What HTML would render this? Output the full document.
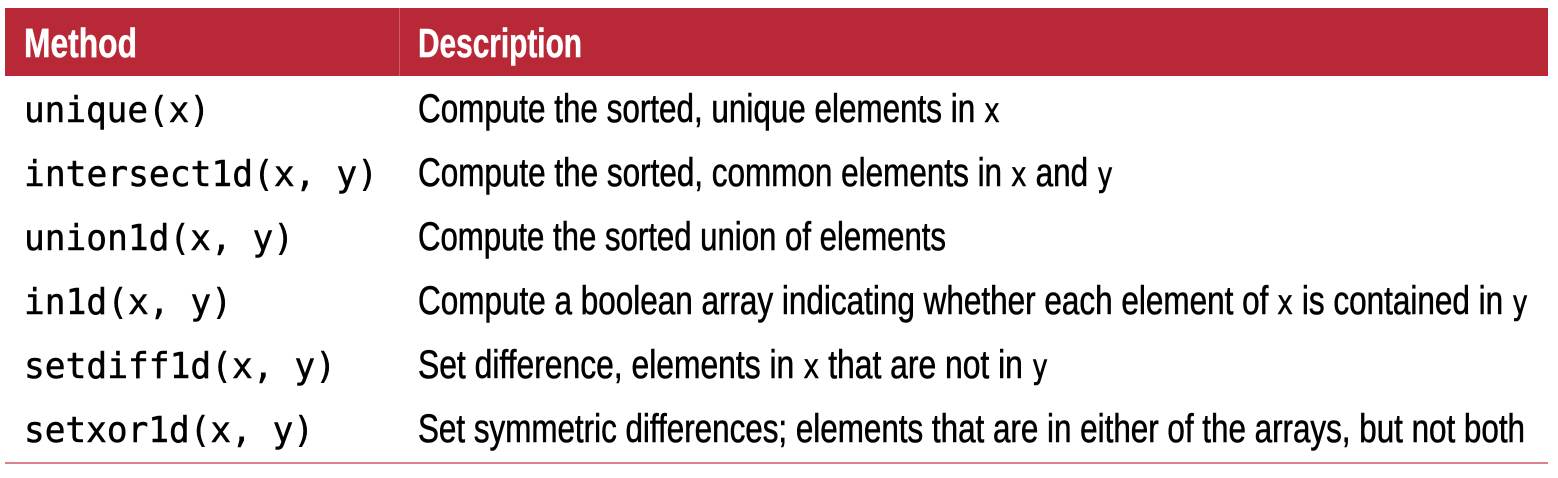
<!DOCTYPE html>
<html><head><meta charset="utf-8"><style>
html,body{margin:0;padding:0;background:#fff;}
svg{display:block;}
.m{font-family:"DejaVu Sans Mono","Liberation Mono",monospace;font-size:36px;fill:#000;stroke:#000;stroke-width:0.5px;}
.d{font-family:"Liberation Sans Narrow","Liberation Sans",sans-serif;font-size:40px;fill:#000;stroke:#000;stroke-width:0.6px;}
.d tspan{font-family:"DejaVu Sans Mono","Liberation Mono",monospace;font-size:34px;}
.h{font-family:"Liberation Sans Narrow","Liberation Sans",sans-serif;font-size:41px;font-weight:bold;fill:#fff;stroke:#fff;stroke-width:0.5px;}
</style></head><body>
<svg width="1558" height="478" viewBox="0 0 1558 478" xmlns="http://www.w3.org/2000/svg">
<rect x="5" y="8" width="1543" height="68" fill="#b92837"/>
<rect x="399" y="8" width="1" height="68" fill="#cf5a66"/>
<text class="h" x="24" y="57" textLength="113" lengthAdjust="spacingAndGlyphs">Method</text>
<text class="h" x="418" y="57" textLength="164" lengthAdjust="spacingAndGlyphs">Description</text>

<text class="m" x="24" y="122" textLength="186" lengthAdjust="spacingAndGlyphs">unique(x)</text>
<text class="m" x="24" y="186" textLength="354" lengthAdjust="spacingAndGlyphs">intersect1d(x, y)</text>
<text class="m" x="24" y="250" textLength="270" lengthAdjust="spacingAndGlyphs">union1d(x, y)</text>
<text class="m" x="24" y="314" textLength="208" lengthAdjust="spacingAndGlyphs">in1d(x, y)</text>
<text class="m" x="24" y="378" textLength="312" lengthAdjust="spacingAndGlyphs">setdiff1d(x, y)</text>
<text class="m" x="24" y="442" textLength="290" lengthAdjust="spacingAndGlyphs">setxor1d(x, y)</text>

<text class="d" x="418" y="122" textLength="582" lengthAdjust="spacingAndGlyphs">Compute the sorted, unique elements in <tspan>x</tspan></text>
<text class="d" x="418" y="186" textLength="695" lengthAdjust="spacingAndGlyphs">Compute the sorted, common elements in <tspan>x</tspan> and <tspan>y</tspan></text>
<text class="d" x="418" y="250" textLength="528" lengthAdjust="spacingAndGlyphs">Compute the sorted union of elements</text>
<text class="d" x="418" y="314" textLength="1110" lengthAdjust="spacingAndGlyphs">Compute a boolean array indicating whether each element of <tspan>x</tspan> is contained in <tspan>y</tspan></text>
<text class="d" x="418" y="378" textLength="630" lengthAdjust="spacingAndGlyphs">Set difference, elements in <tspan>x</tspan> that are not in <tspan>y</tspan></text>
<text class="d" x="418" y="442" textLength="1107" lengthAdjust="spacingAndGlyphs">Set symmetric differences; elements that are in either of the arrays, but not both</text>

<rect x="5" y="462" width="1543" height="2" fill="#d8838b"/>
</svg>
</body></html>
